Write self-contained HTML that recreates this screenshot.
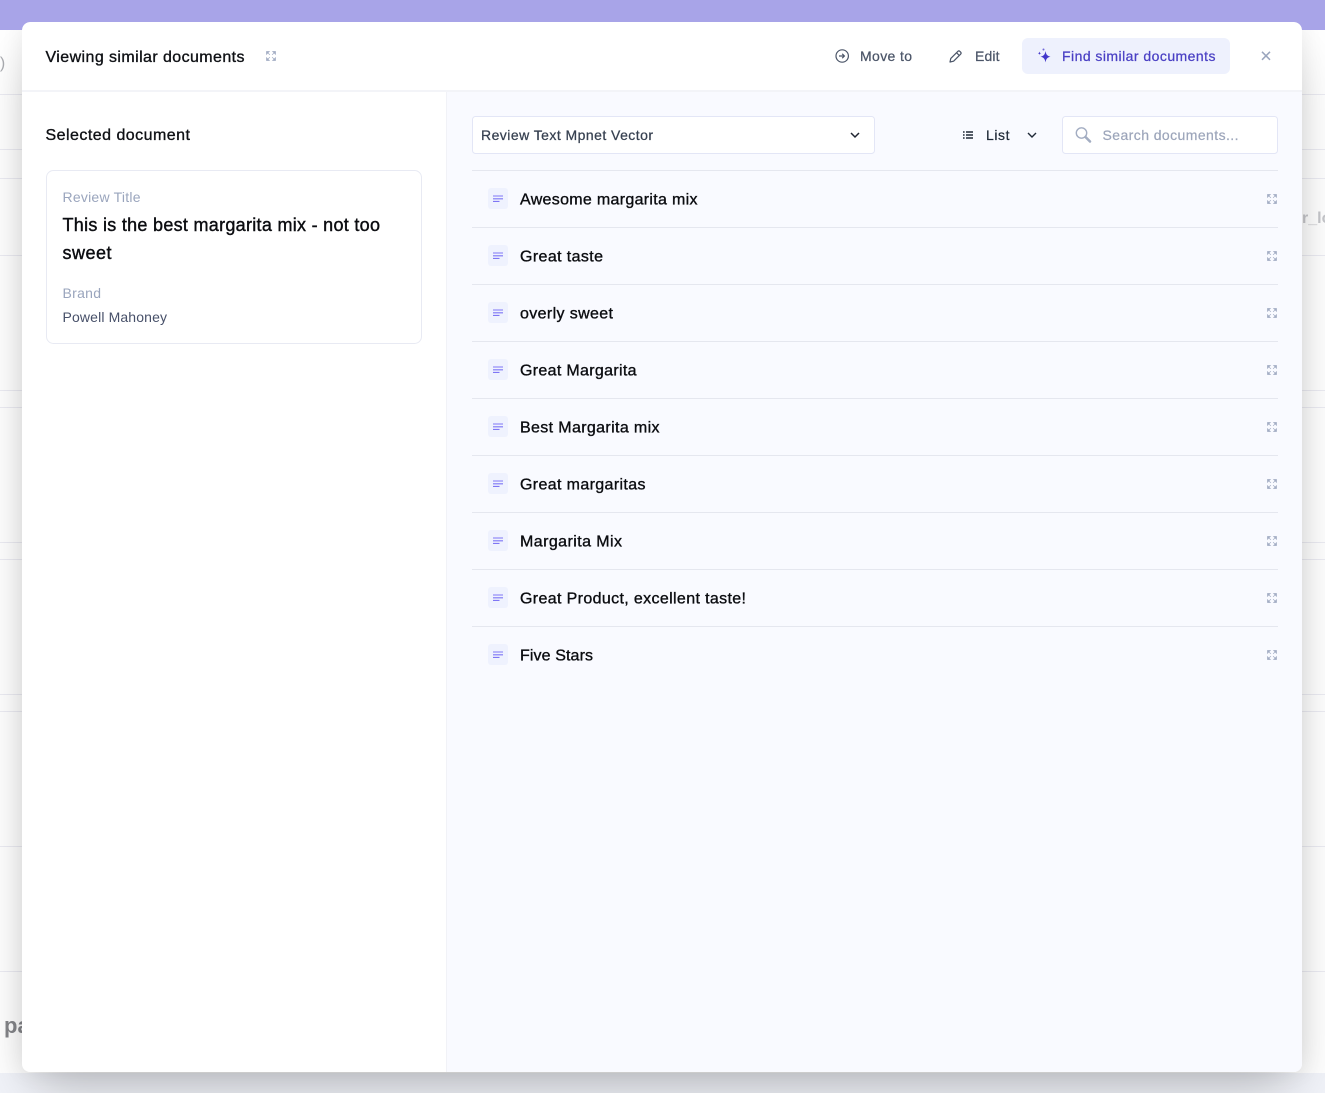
<!DOCTYPE html>
<html lang="en">
<head>
<meta charset="utf-8">
<title>Viewing similar documents</title>
<style>
html,body{margin:0;padding:0;width:1325px;height:1093px;overflow:hidden;background:#f1f3f9;}
#page{position:absolute;left:0;top:0;width:1325px;height:1073px;background:#fff;overflow:hidden;}
#top{position:absolute;left:0;top:0;width:1325px;height:30px;background:#a8a4e8;}
.bl{position:absolute;left:0;width:1325px;height:1px;background:#ececf3;}
#modal{position:absolute;left:22px;top:22px;width:1280px;height:1050px;border-radius:8px;background:#fff;box-shadow:0 25px 50px -12px rgba(0,0,0,.25),0 0 24px rgba(0,0,0,.07);overflow:hidden;}
#right{position:absolute;left:425px;top:70px;width:855px;height:980px;background:#f9faff;}
#hline{position:absolute;left:0;top:68px;width:1280px;height:2px;background:#f3f4f8;}
#vline{position:absolute;left:424px;top:70px;width:1px;height:980px;background:#f1f2f7;}
svg{position:absolute;left:0;top:0;}
text{font-family:"Liberation Sans",sans-serif;}
</style>
</head>
<body>
<div id="page">
<div id="top"></div>
<div class="bl" style="top:94px"></div>
<div class="bl" style="top:149px"></div>
<div class="bl" style="top:178px"></div>
<div class="bl" style="top:255px"></div>
<div class="bl" style="top:390px"></div>
<div class="bl" style="top:407px"></div>
<div class="bl" style="top:542px"></div>
<div class="bl" style="top:559px"></div>
<div class="bl" style="top:694px"></div>
<div class="bl" style="top:711px"></div>
<div class="bl" style="top:846px"></div>
<div class="bl" style="top:971px"></div>
</div>
<svg width="1325" height="1093" viewBox="0 0 1325 1093" style="position:absolute;left:0;top:0">
<text x="-9" y="68" font-size="16" fill="#a9abb0">0)</text>
<text x="1302" y="223" font-size="16" fill="#c6c7cb" font-weight="700">r_lo</text>
<text x="4" y="1033" font-size="22" fill="#85868a" font-weight="700">pa</text>
</svg>
<div id="modal">
<div id="right"></div>
<div id="hline"></div>
<div id="vline"></div>
</div>
<svg width="1325" height="1093" viewBox="0 0 1325 1093">
<defs>
<g id="ex" fill="#a3adc4" stroke="#a3adc4" stroke-width=".7">
<path d="M.5 .5h2.800L.5 3.300zM9.500 .5v2.800L6.700 .5zM.5 9.500V6.700l2.800 2.800zM9.500 9.500H6.700l2.800-2.800z"/>
<path d="M1.500 1.500L3.900 3.900M8.500 1.500L6.100 3.900M1.500 8.500L3.900 6.100M8.500 8.500L6.100 6.100" fill="none"/>
</g>
<g id="doc">
<rect x="0" y="0" width="20" height="21" rx="3" fill="#eff2fe"/>
<path d="M5 8h10M5 10.800h10M5 13.400h6.500" stroke="#7f76f5" stroke-width="1.100" fill="none"/>
</g>
<g id="row"><use href="#doc" x="488" y="188"/><use href="#ex" x="1267" y="194"/></g>
</defs>

<path d="M0 0H1325V30H1302A8 8 0 0 0 1294 22H30A8 8 0 0 0 22 30H0Z" fill="#a8a4e8"/>

<text x="45.500" y="62" font-size="16" fill="#0f1115" stroke="#0f1115" stroke-width=".35" textLength="199" lengthAdjust="spacing">Viewing similar documents</text>
<use href="#ex" x="266" y="51"/>

<path d="M836 56a6.200 6.200 0 1 0 12.400 0a6.200 6.200 0 1 0-12.400 0z" fill="none" stroke="#4b5568" stroke-width="1.200"/>
<path d="M839 56h5M842.200 53.800l2.200 2.200-2.200 2.200" fill="none" stroke="#4b5568" stroke-width="1.200"/>
<text x="860" y="61" font-size="14" fill="#4b5568" stroke="#4b5568" stroke-width=".25" textLength="52" lengthAdjust="spacing">Move to</text>

<path d="M950 62l.8-3.600 7-7a1.500 1.500 0 0 1 2.100 0l.7.7a1.500 1.500 0 0 1 0 2.100l-7 7z M956.500 52.700l2.800 2.800" fill="none" stroke="#4b5568" stroke-width="1.200" stroke-linejoin="round"/>
<text x="975" y="61" font-size="14" fill="#4b5568" stroke="#4b5568" stroke-width=".25" textLength="24.500" lengthAdjust="spacing">Edit</text>

<rect x="1022" y="38" width="208" height="36" rx="6" fill="#eef1fd"/>
<path d="M1045.500 51c.6 3.600 1.700 5 5 5.700-3.300.7-4.400 2.100-5 5.700-.6-3.600-1.700-5-5-5.700 3.300-.7 4.400-2.100 5-5.700z" fill="#4338ca"/>
<path d="M1039.500 51.500c.2 1.200.6 1.600 1.700 1.800-1.100.2-1.500.6-1.700 1.800-.2-1.200-.6-1.600-1.700-1.800 1.100-.2 1.500-.6 1.700-1.800z" fill="#4338ca"/>
<circle cx="1043.500" cy="49.500" r="1" fill="#6f66d8"/>
<text x="1062" y="61" font-size="14" fill="#4a40c4" stroke="#4a40c4" stroke-width=".25" textLength="153.500" lengthAdjust="spacing">Find similar documents</text>

<path d="M1262 51.800l8 8M1270 51.800l-8 8" stroke="#9aa5bd" stroke-width="1.500" fill="none"/>

<text x="45.500" y="140" font-size="16" fill="#0f1115" stroke="#0f1115" stroke-width=".35" textLength="144.500" lengthAdjust="spacing">Selected document</text>

<rect x="46.500" y="170.500" width="375" height="173" rx="7" fill="#fff" stroke="#e8eaf3"/>
<text x="62.500" y="202" font-size="14" fill="#9aa5bd" textLength="78" lengthAdjust="spacing">Review Title</text>
<text x="62.500" y="231" font-size="18" fill="#0b0c10" stroke="#0b0c10" stroke-width=".4" textLength="317.500" lengthAdjust="spacing">This is the best margarita mix - not too</text>
<text x="62.500" y="259" font-size="18" fill="#0b0c10" stroke="#0b0c10" stroke-width=".4" textLength="49" lengthAdjust="spacing">sweet</text>
<text x="62.500" y="298" font-size="14" fill="#9aa5bd" textLength="38.500" lengthAdjust="spacing">Brand</text>
<text x="62.500" y="322" font-size="14" fill="#475069" textLength="104.500" lengthAdjust="spacing">Powell Mahoney</text>

<rect x="472.500" y="116.500" width="402" height="37" rx="3" fill="#fff" stroke="#e3e6f6"/>
<text x="481" y="140" font-size="14" fill="#374151" stroke="#374151" stroke-width=".25" textLength="172" lengthAdjust="spacing">Review Text Mpnet Vector</text>
<path d="M851 133l4 4 4-4" fill="none" stroke="#1f2430" stroke-width="1.500"/>

<path d="M966 132h7M966 135h7M966 138h7" stroke="#1f2937" stroke-width="1.500" fill="none"/>
<path d="M963 132h1.600M963 135h1.600M963 138h1.600" stroke="#1f2937" stroke-width="1.500" fill="none"/>
<text x="986" y="140" font-size="14" fill="#1f2937" stroke="#1f2937" stroke-width=".25" textLength="23.500" lengthAdjust="spacing">List</text>
<path d="M1028 133l4 4 4-4" fill="none" stroke="#1f2937" stroke-width="1.400"/>

<rect x="1062.500" y="116.500" width="215" height="37" rx="3" fill="#fff" stroke="#e3e6f6"/>
<circle cx="1081.500" cy="133" r="5.200" fill="none" stroke="#a3adc2" stroke-width="1.400"/>
<path d="M1085.500 137l4.500 4.500" stroke="#a3adc2" stroke-width="2.600" stroke-linecap="round" fill="none"/>
<text x="1102.500" y="140" font-size="14" fill="#9ca5ba" stroke="#9ca5ba" stroke-width=".2" textLength="136" lengthAdjust="spacing">Search documents...</text>

<g fill="#e5e7ef">
<rect x="472" y="170" width="806" height="1"/>
<rect x="472" y="227" width="806" height="1"/>
<rect x="472" y="284" width="806" height="1"/>
<rect x="472" y="341" width="806" height="1"/>
<rect x="472" y="398" width="806" height="1"/>
<rect x="472" y="455" width="806" height="1"/>
<rect x="472" y="512" width="806" height="1"/>
<rect x="472" y="569" width="806" height="1"/>
<rect x="472" y="626" width="806" height="1"/>
</g>

<use href="#row"/>
<use href="#row" y="57"/>
<use href="#row" y="114"/>
<use href="#row" y="171"/>
<use href="#row" y="228"/>
<use href="#row" y="285"/>
<use href="#row" y="342"/>
<use href="#row" y="399"/>
<use href="#row" y="456"/>

<g font-size="16" fill="#0b0c10" stroke="#0b0c10" stroke-width=".35">
<text x="520" y="204.500" textLength="177.500" lengthAdjust="spacing">Awesome margarita mix</text>
<text x="520" y="261.500" textLength="83" lengthAdjust="spacing">Great taste</text>
<text x="520" y="318.500" textLength="93" lengthAdjust="spacing">overly sweet</text>
<text x="520" y="375.500" textLength="116.500" lengthAdjust="spacing">Great Margarita</text>
<text x="520" y="432.500" textLength="139.500" lengthAdjust="spacing">Best Margarita mix</text>
<text x="520" y="489.500" textLength="125.500" lengthAdjust="spacing">Great margaritas</text>
<text x="520" y="546.500" textLength="102" lengthAdjust="spacing">Margarita Mix</text>
<text x="520" y="603.500" textLength="226" lengthAdjust="spacing">Great Product, excellent taste!</text>
<text x="520" y="660.500" textLength="73" lengthAdjust="spacing">Five Stars</text>
</g>
</svg>
</body>
</html>
